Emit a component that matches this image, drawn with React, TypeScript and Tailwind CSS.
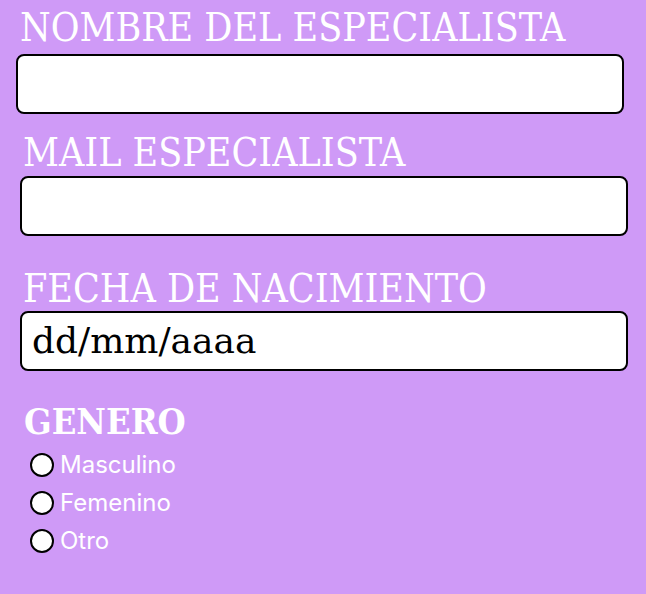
import { useState } from "react";

const serif = { fontFamily: '"DejaVu Serif", "Liberation Serif", serif' };

export default function App() {
  const [genero, setGenero] = useState("");

  return (
    <div className="min-h-[594px] w-[646px] bg-[#cf9af7] overflow-hidden">
      <form className="flex flex-col pt-[6px]">
        <label
          className="ml-[20px] text-[39px] leading-[44px] text-white [font-stretch:condensed]"
          style={serif}
        >
          NOMBRE DEL ESPECIALISTA
        </label>
        <input
          type="text"
          className="ml-[16px] mt-[4px] h-[60px] w-[608px] rounded-lg border-2 border-black bg-white px-3"
        />

        <label
          className="ml-[23px] mt-[17px] text-[39px] leading-[44px] text-white [font-stretch:condensed]"
          style={serif}
        >
          MAIL ESPECIALISTA
        </label>
        <input
          type="text"
          className="ml-[20px] mt-[1px] h-[60px] w-[608px] rounded-lg border-2 border-black bg-white px-3"
        />

        <label
          className="ml-[23px] mt-[31px] text-[39px] leading-[44px] text-white [font-stretch:condensed]"
          style={serif}
        >
          FECHA DE NACIMIENTO
        </label>
        <div
          className="ml-[20px] mt-0 flex h-[60px] w-[608px] items-center rounded-lg border-2 border-black bg-white px-[10px] text-[36px] text-black"
          style={serif}
        >
          dd/mm/aaaa
        </div>

        <label
          className="ml-[24px] mt-[28px] text-[36px] leading-[44px] font-bold text-white [font-stretch:condensed]"
          style={serif}
        >
          GENERO
        </label>
        <div className="ml-[30px] mt-[10px] flex flex-col gap-[14px]">
          {["Masculino", "Femenino", "Otro"].map((g) => (
            <label
              key={g}
              className="flex items-center gap-[6px] text-[24px] leading-[24px] text-white"
              style={{ fontFamily: "Inter, sans-serif" }}
              onClick={() => setGenero(g)}
            >
              <span className="flex h-[24px] w-[24px] items-center justify-center rounded-full border-2 border-black bg-white">
                {genero === g && <span className="h-[11px] w-[11px] rounded-full bg-black" />}
              </span>
              {g}
            </label>
          ))}
        </div>
      </form>
    </div>
  );
}
